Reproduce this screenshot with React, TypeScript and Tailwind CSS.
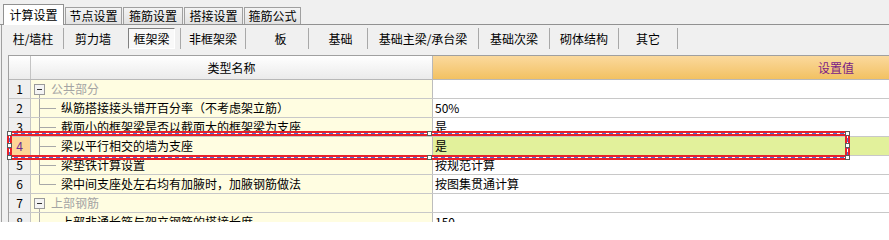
import React from 'react';

type Row = {
  n: number;
  kind: 'group' | 'child' | 'last';
  name: string;
  value: string;
  selected?: boolean;
};

const rows: Row[] = [
  { n: 1, kind: 'group', name: '公共部分', value: '' },
  { n: 2, kind: 'child', name: '纵筋搭接接头错开百分率（不考虑架立筋）', value: '50%' },
  { n: 3, kind: 'child', name: '截面小的框架梁是否以截面大的框架梁为支座', value: '是' },
  { n: 4, kind: 'child', name: '梁以平行相交的墙为支座', value: '是', selected: true },
  { n: 5, kind: 'child', name: '梁垫铁计算设置', value: '按规范计算' },
  { n: 6, kind: 'last', name: '梁中间支座处左右均有加腋时，加腋钢筋做法', value: '按图集贯通计算' },
  { n: 7, kind: 'group', name: '上部钢筋', value: '' },
  { n: 8, kind: 'child', name: '上部非通长筋与架立钢筋的搭接长度', value: '150' },
];

const tabs = [
  { label: '节点设置', w: 'w-[57px]' },
  { label: '箍筋设置', w: 'w-[60px]' },
  { label: '搭接设置', w: 'w-[59px]' },
  { label: '箍筋公式', w: 'w-[57px]' },
];

const tools = [
  { label: '柱/墙柱', cls: 'w-[61px] border-r' },
  { label: '剪力墙', cls: 'w-[64px] pr-[6px]' },
  { label: '框架梁', cls: 'w-[53px] border-r', pressed: true },
  { label: '非框架梁', cls: 'w-[65px] border-r' },
  { label: '板', cls: 'w-[63px] border-r pl-[7px]' },
  { label: '基础', cls: 'w-[59px] border-r pl-[5px]' },
  { label: '基础主梁/承台梁', cls: 'w-[111px] border-r' },
  { label: '基础次梁', cls: 'w-[71px] border-r' },
  { label: '砌体结构', cls: 'w-[69px] border-r' },
  { label: '其它', cls: 'w-[59px] border-r' },
];

// tree connector drawn to the left of each name
const TreeMark = ({ kind }: { kind: Row['kind'] }) => {
  if (kind === 'group') {
    return (
      <svg width="20" height="18" className="shrink-0">
        <line x1="8.5" y1="15" x2="8.5" y2="18" stroke="#a8a8a8" />
        <rect x="3.5" y="4.5" width="10" height="10" fill="#f4f4f4" stroke="#9a9a9a" />
        <line x1="6" y1="9.5" x2="11" y2="9.5" stroke="#333" />
      </svg>
    );
  }
  return (
    <svg width="30" height="18" className="shrink-0">
      <line x1="8.5" y1="0" x2="8.5" y2={kind === 'last' ? 9.5 : 18} stroke="#a8a8a8" />
      <line x1="8.5" y1="9.5" x2="25" y2="9.5" stroke="#a8a8a8" />
    </svg>
  );
};

const Band = ({ vertical }: { vertical?: boolean }) =>
  vertical ? (
    <div className="h-full w-[5px] bg-[#e8202a] flex justify-center">
      <div className="w-px h-full bg-[repeating-linear-gradient(180deg,#4a72d8_0_4px,#ffffff_4px_7px)]" />
    </div>
  ) : (
    <div className="w-full h-[5px] bg-[#e8202a] flex items-center">
      <div className="h-px w-full bg-[repeating-linear-gradient(90deg,#4a72d8_0_4px,#ffffff_4px_7px)]" />
    </div>
  );

const Handle = ({ pos }: { pos: string }) => (
  <div className={`absolute w-[5px] h-[5px] bg-white border border-[#5a5a5a] ${pos}`} />
);

export default function App() {
  return (
    <div className="relative w-[889px] h-[222px] overflow-hidden bg-[#f0f0f0] text-[12px] leading-[18px] text-black font-['Noto_Sans_CJK_SC',sans-serif]">
      {/* Top tabs */}
      <div className="flex items-end gap-px h-[25px] pl-[3px] border-b border-[#919191]">
        <div className="relative mb-[-1px] w-[61px] h-[21px] flex items-center justify-center bg-white border-x border-t border-[#919191]">
          计算设置
        </div>
        {tabs.map((t) => (
          <div
            key={t.label}
            className={`${t.w} h-[17px] flex items-center justify-center border-x border-t border-[#a0a0a0] bg-gradient-to-b from-[#f4f4f4] to-[#e2e2e2]`}
          >
            {t.label}
          </div>
        ))}
      </div>

      <div className="ml-px border-l border-[#a0a0a0]">
        {/* Component toolbar */}
        <div className="flex items-start h-[30px] pt-[3px] pl-px">
          {tools.map((t) => (
            <div
              key={t.label}
              className={`${t.cls} h-[21px] flex items-center justify-center border-[#a8a8a8]`}
            >
              {t.pressed ? (
                <div className="w-[48px] h-[21px] mr-[5px] flex items-center justify-center border-t border-l border-[#808080] border-b border-r border-b-white border-r-white bg-[#f9f9f9]">
                  {t.label}
                </div>
              ) : (
                t.label
              )}
            </div>
          ))}
        </div>

        {/* Property grid */}
        <div className="ml-[6px] border-t border-l border-[#a0a0a0]">
          <div className="flex h-[24px] border-b border-[#b8b8b8]">
            <div className="w-[22px] shrink-0 border-r border-[#c4c4c4] bg-gradient-to-b from-white to-[#ececec]" />
            <div className="w-[402px] shrink-0 flex items-center justify-center border-r border-[#b8b8b8] bg-gradient-to-b from-white to-[#ebebeb]">
              类型名称
            </div>
            <div className="flex-1 flex items-center justify-end pr-[35px] text-[#7a1a86] bg-gradient-to-b from-[#fbd99c] to-[#f2c161]">
              设置值
            </div>
          </div>

          {rows.map((r) => (
            <div key={r.n} className="flex h-[19px] border-b border-[#c8c8c8]">
              <div
                className={`w-[22px] shrink-0 flex items-center justify-center border-r border-[#c4c4c4] ${
                  r.selected ? 'bg-[#fdd597] text-[#6b2c91]' : 'bg-[#efefef]'
                }`}
              >
                {r.n}
              </div>
              <div className="w-[402px] shrink-0 flex items-center border-r border-[#bdbdbd] bg-[#fffde1] whitespace-nowrap overflow-hidden">
                <TreeMark kind={r.kind} />
                <span className={r.kind === 'group' ? 'text-[#a4a4a4]' : ''}>{r.name}</span>
              </div>
              <div className={`flex-1 flex items-center pl-[2px] ${r.selected ? 'bg-[#e2f19b]' : 'bg-white'}`}>
                {r.value}
              </div>
            </div>
          ))}
        </div>
      </div>

      {/* Selection frame around row 4 */}
      <div className="absolute left-[7px] top-[131px] w-[843px] h-[29px] flex flex-col justify-between">
        <Band />
        <Band />
      </div>
      <div className="absolute left-[7px] top-[131px] h-[29px]">
        <Band vertical />
      </div>
      <div className="absolute left-[845px] top-[131px] h-[29px]">
        <Band vertical />
      </div>
      <Handle pos="left-[7px] top-[131px]" />
      <Handle pos="left-[427px] top-[131px]" />
      <Handle pos="left-[845px] top-[131px]" />
      <Handle pos="left-[7px] top-[143px]" />
      <Handle pos="left-[845px] top-[143px]" />
      <Handle pos="left-[7px] top-[155px]" />
      <Handle pos="left-[427px] top-[155px]" />
      <Handle pos="left-[845px] top-[155px]" />
    </div>
  );
}
